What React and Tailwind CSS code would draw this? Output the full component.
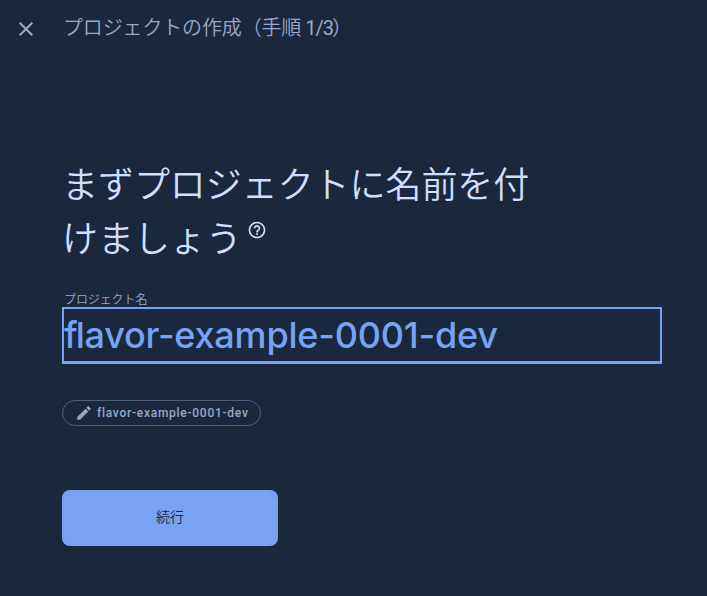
function Icon({ d, className }) {
  return (
    <svg viewBox="0 0 24 24" fill="currentColor" className={className} aria-hidden="true">
      <path d={d} />
    </svg>
  );
}

const CLOSE = "M19 6.41 17.59 5 12 10.59 6.41 5 5 6.41 10.59 12 5 17.59 6.41 19 12 13.41 17.59 19 19 17.59 13.41 12z";
const HELP =
  "M11 16h2v2h-2v-2zm1-14C6.48 2 2 6.48 2 12s4.48 10 10 10 10-4.48 10-10S17.52 2 12 2zm0 18c-4.41 0-8-3.59-8-8s3.59-8 8-8 8 3.59 8 8-3.59 8-8 8zm0-14c-2.21 0-4 1.79-4 4h2c0-1.1.9-2 2-2s2 .9 2 2c0 2-3 1.75-3 5h2c0-2.25 3-2.5 3-5 0-2.21-1.79-4-4-4z";
const EDIT =
  "M3 17.25V21h3.75L17.81 9.94l-3.75-3.75L3 17.25zM20.71 7.04c.39-.39.39-1.02 0-1.41l-2.34-2.34c-.39-.39-1.02-.39-1.41 0l-1.83 1.83 3.75 3.75 1.83-1.83z";

export default function App() {
  return (
    <div className="h-[596px] w-[707px] overflow-hidden bg-[#1a283e] font-['Roboto','Noto_Sans_CJK_JP',sans-serif]">
      <header className="flex h-14 items-center pl-[14px] text-[#97a9c6]">
        <button aria-label="閉じる" className="mt-0.5">
          <Icon d={CLOSE} className="size-6" />
        </button>
        <h1 className="ml-[25px] flex text-[20px] leading-7 font-[350] tracking-[-0.15px] whitespace-nowrap">
          プロジェクトの作成（手順
          <span className="ml-[4px] text-[20px] font-normal tracking-[-1px]">1/3</span>
          <span className="-ml-px">）</span>
        </h1>
      </header>

      <main className="w-[662px] pt-[103px] pl-[62px]">
        <h2 className="w-[480px] text-[36px] leading-[54px] font-[350] tracking-[-0.06px] text-[#cfdfff]">
          <span className="block whitespace-nowrap">まずプロジェクトに名前を付</span>
          <span className="flex whitespace-nowrap">
            けましょう
            <Icon d={HELP} className="mt-[7px] ml-[5px] size-5" />
          </span>
        </h2>

        <label className="mt-[25px] block h-[15px] pl-[2px] text-[12px] leading-[17px] font-[350] tracking-[-0.1px] text-[#97a9c6]">
          プロジェクト名
        </label>
        <div className="flex h-[57px] w-[600px] items-center border-2 border-b-[3px] border-[#78a3f2] font-['Inter',sans-serif] text-[36px] leading-[52px] font-medium whitespace-nowrap text-[#78a3f2]">
          <span className="tracking-[-2px]">f</span>
          <span className="tracking-[-0.2px]">lavor-example-0001-dev</span>
        </div>

        <div className="mt-9 flex h-[26px] w-[199px] items-center rounded-full border border-[#4d5e7b] pl-[12px] text-[#97a9c6]">
          <Icon d={EDIT} className="size-[18px]" />
          <span className="ml-[4px] text-[12px] leading-4 font-medium tracking-[0.73px] whitespace-nowrap">
            flavor-example-0001-dev
          </span>
        </div>

        <button className="mt-16 flex h-14 w-[216px] items-center justify-center rounded-lg bg-[#78a3f2] pb-[2px] text-[14px] font-[350] text-[#1a283e]">
          続行
        </button>
      </main>
    </div>
  );
}
